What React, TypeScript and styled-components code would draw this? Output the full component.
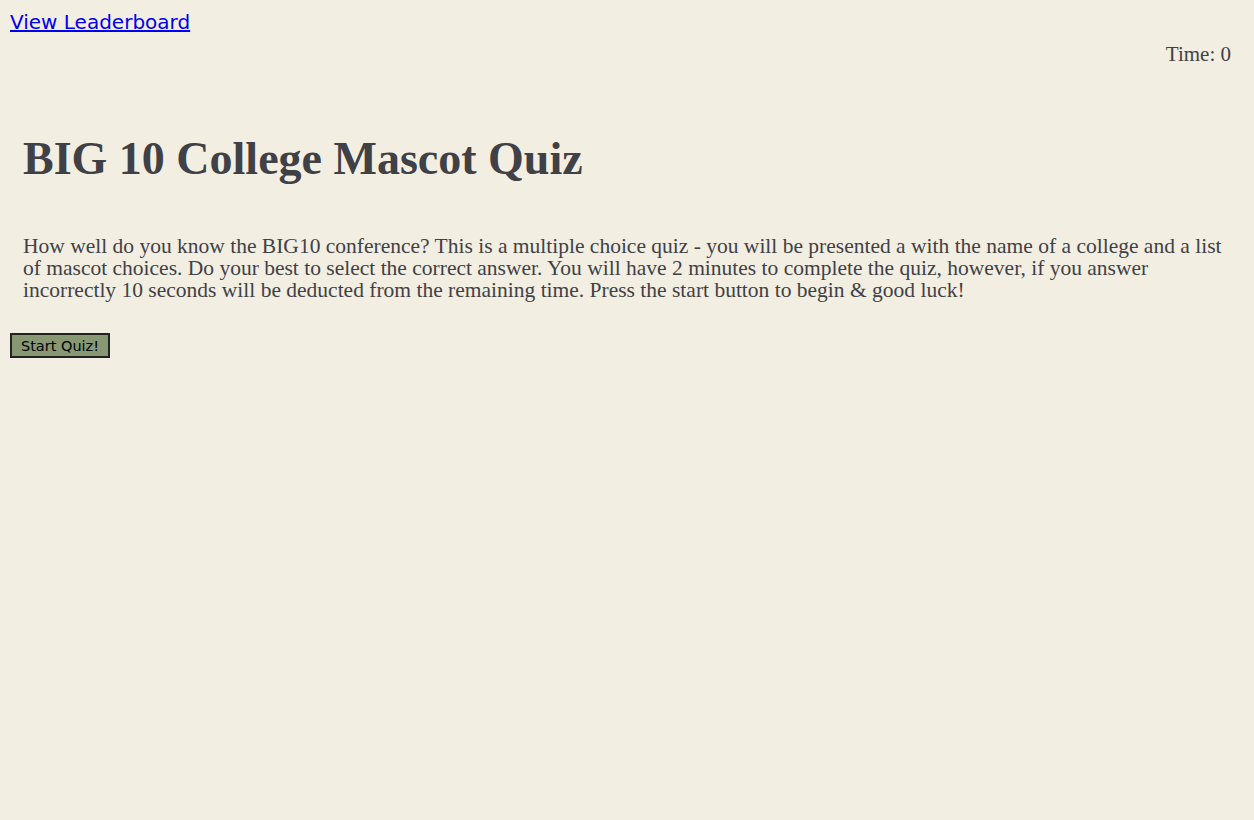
import React from "react";
import styled, { createGlobalStyle } from "styled-components";

const Global = createGlobalStyle`
  html, body { margin: 0; padding: 0; background: #f3eee2; }
  body { font-family: "Liberation Serif", Georgia, serif; color: #3f4146; }
`;

const Page = styled.div`
  padding: 10px 0 0 10px;
  min-height: 810px;
`;

const LeaderLink = styled.a`
  font-family: "DejaVu Sans", Verdana, sans-serif;
  font-size: 20px;
  color: #0000ee;
  text-decoration: underline;
  line-height: 24px;
  display: inline-block;
`;

const TimerRow = styled.div`
  display: flex;
  justify-content: flex-end;
  padding-right: 23px;
  margin-top: 8px;
  font-size: 21px;
  line-height: 24px;
`;

const Intro = styled.section`
  padding: 0 22px 0 13px;
`;

const Title = styled.h1`
  font-family: "Liberation Serif", Georgia, serif;
  font-weight: bold;
  font-size: 46px;
  line-height: 52px;
  margin: 67px 0 0;
`;

const Blurb = styled.p`
  font-size: 21.5px;
  line-height: 22px;
  margin: 50px 0 0;
`;

const StartButton = styled.button`
  margin-top: 32px;
  font-family: "DejaVu Sans", Verdana, sans-serif;
  font-size: 14.5px;
  color: #000;
  background: #879872;
  border: 2px solid #222;
  padding: 0 4px;
  height: 25px;
  width: 100px;
`;

export default function App() {
  return (
    <>
      <Global />
      <Page>
        <LeaderLink href="#">View Leaderboard</LeaderLink>
        <TimerRow>Time: 0</TimerRow>
        <Intro>
          <Title>BIG 10 College Mascot Quiz</Title>
          <Blurb>
            How well do you know the BIG10 conference? This is a multiple choice quiz - you will be
            presented a with the name of a college and a list of mascot choices. Do your best to
            select the correct answer. You will have 2 minutes to complete the quiz, however, if you
            answer incorrectly 10 seconds will be deducted from the remaining time. Press the start
            button to begin &amp; good luck!
          </Blurb>
        </Intro>
        <StartButton>Start Quiz!</StartButton>
      </Page>
    </>
  );
}
